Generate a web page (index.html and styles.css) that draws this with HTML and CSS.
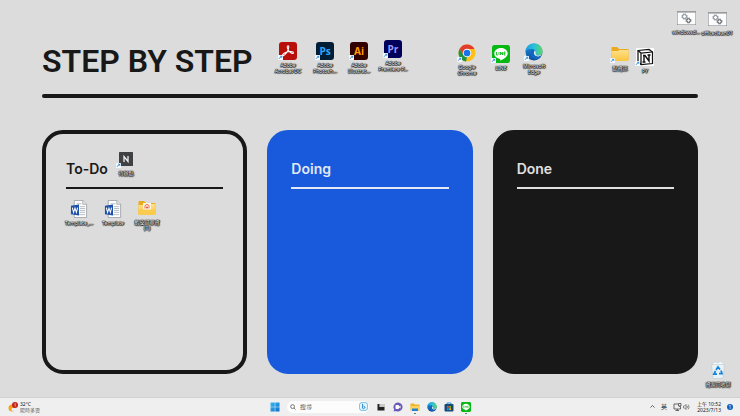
FILE: index.html
```html
<!DOCTYPE html>
<html lang="zh-Hant">
<head>
  <meta charset="UTF-8" />
  <meta name="viewport" content="width=device-width, initial-scale=1" />
  <title>Step by Step</title>
  <link rel="stylesheet" href="styles.css">
</head>
<body>
  <!-- shared icons -->
  <svg class="sprite" aria-hidden="true">
    <defs>
      <linearGradient id="edgeTop" x1="0" y1="0" x2="1" y2="0">
        <stop offset="0" stop-color="#1b9de2" />
        <stop offset="0.55" stop-color="#2cc3d5" />
        <stop offset="1" stop-color="#62d65b" />
      </linearGradient>
      <linearGradient id="edgeBody" x1="0" y1="0" x2="0" y2="1">
        <stop offset="0" stop-color="#1b8fe0" />
        <stop offset="1" stop-color="#0c4fa0" />
      </linearGradient>
      <linearGradient id="folderFront" x1="0" y1="0" x2="0" y2="1">
        <stop offset="0" stop-color="#ffe08a" />
        <stop offset="1" stop-color="#fbc540" />
      </linearGradient>
      <linearGradient id="winBlue" x1="0" y1="0" x2="1" y2="1">
        <stop offset="0" stop-color="#35b8f1" />
        <stop offset="1" stop-color="#0a70cf" />
      </linearGradient>
    </defs>
    <symbol id="arrow" viewBox="0 0 10 10">
      <rect width="10" height="10" rx="1" fill="#f4f9fd" />
      <path d="M2.500 8C2.500 5.500 4 4.500 6 4.500M4 2.500H7.500V6M7.500 2.500L5.500 4.700" fill="none" stroke="#1c7fd0" stroke-width="1.400" />
    </symbol>
    <symbol id="line" viewBox="0 0 36 36">
      <rect width="36" height="36" rx="5" fill="#06b912" />
      <path d="M18 6C10 6 4.500 11 4.500 17C4.500 22.500 9 26.500 15 27.500C17.500 28 16.500 29.500 16.500 31.500C20 30 31.500 24 31.500 17C31.500 11 26 6 18 6Z" fill="#fff" />
      <path d="M9 14V20H12M14 14V20M17 20V14L21 20V14M27 14H24V20H27M24 17H27" fill="none" stroke="#06b912" stroke-width="1.700" />
    </symbol>
    <symbol id="edge" viewBox="0 0 36 36">
      <circle cx="18" cy="18" r="17" fill="url(#edgeBody)" />
      <path d="M1 17C2 7 9 1 18 1C28 1 35 8 35 17C35 22 31 25 26 25C22 25 20 23.500 21 21.500C23 18 20 13 14 12C8 11.500 3 13 1 17Z" fill="url(#edgeTop)" />
      <path d="M15 13C10 17 10 25 16 30C21 33 28 32 32 27C24 30 17 27 17 20C17 17 19 15 20 15C18 13.500 17 13 15 13Z" fill="#1467bd" />
      <path d="M20 15C17 17 17 24 22 26C26 28 32 27 35 21C32 25 26 26 23 24.500C20 23 23 20 20 15Z" fill="#e9f6fb" />
    </symbol>
    <symbol id="folder" viewBox="0 0 36 30">
      <path d="M1 3Q1 1 3 1H12L16 5H33Q35 5 35 7V27H1Z" fill="#eba91d" />
      <path d="M1 9H14L17 7H35V27Q35 29 33 29H3Q1 29 1 27Z" fill="url(#folderFront)" />
    </symbol>
    <symbol id="word" viewBox="0 0 36 38">
      <path d="M8 1H26L34 9V37H8Z" fill="#fff" stroke="#8c9299" stroke-width="1.500" />
      <path d="M26 1V9H34" fill="#e6e9ed" stroke="#8c9299" stroke-width="1.500" />
      <path d="M13 8H23M20 14H31M20 18H31M20 22H31M20 26H31M13 31H31" stroke="#9aa3ad" stroke-width="1.500" />
      <path d="M1 12L18 9.500V32.500L1 30Z" fill="#1d50a8" />
      <path d="M4 16L6.500 26L9.500 17L12.500 26L15 16" fill="none" stroke="#fff" stroke-width="2.200" />
    </symbol>
    <symbol id="batch" viewBox="0 0 38 28">
      <rect x="0.500" y="0.500" width="37" height="27" fill="#fdfdfd" stroke="#7c8084" />
      <path d="M1 2H37" stroke="#7c8084" stroke-width="2" />
      <circle cx="15" cy="11" r="4" fill="none" stroke="#7b868e" stroke-width="2" />
      <circle cx="15" cy="11" r="5.500" fill="none" stroke="#7b868e" stroke-width="2" stroke-dasharray="2 2.300" />
      <circle cx="23" cy="19" r="3.500" fill="none" stroke="#444c52" stroke-width="2" />
      <circle cx="23" cy="19" r="5" fill="none" stroke="#444c52" stroke-width="2" stroke-dasharray="2 1.900" />
    </symbol>
  </svg>

  <main class="desktop">
    <div class="board">
      <h1>STEP BY STEP</h1>
      <div class="columns">
        <section class="card todo"><h2>To-Do</h2></section>
        <section class="card doing"><h2>Doing</h2></section>
        <section class="card done"><h2>Done</h2></section>
      </div>
    </div>

    <button class="shortcut acrobat">
      <svg class="icon" viewBox="0 0 36 36"><rect width="36" height="36" rx="6" fill="#b90f0b" /><path d="M8 27C5 25 12 21 18 19.500C25 18 30 20 28.500 22.500C26 25 18 18 16.500 11C16 7 20 6 19.500 11C19 17 11 29 8 27Z" fill="none" stroke="#fff" stroke-width="2.200" /></svg>
      <svg class="arrow"><use href="#arrow" /></svg>
      <span>Adobe<br>Acrobat DC</span>
    </button>
    <button class="shortcut photoshop">
      <svg class="icon" viewBox="0 0 36 36"><rect width="36" height="36" rx="6" fill="#001e36" /><text x="18" y="25" class="logo-text" fill="#31a8ff">Ps</text></svg>
      <svg class="arrow"><use href="#arrow" /></svg>
      <span>Adobe<br>Photosh...</span>
    </button>
    <button class="shortcut illustrator">
      <svg class="icon" viewBox="0 0 36 36"><rect width="36" height="36" rx="6" fill="#330000" /><text x="18" y="25" class="logo-text" fill="#ff9a00">Ai</text></svg>
      <svg class="arrow"><use href="#arrow" /></svg>
      <span>Adobe<br>Illustrat...</span>
    </button>
    <button class="shortcut premiere">
      <svg class="icon" viewBox="0 0 36 36"><rect width="36" height="36" rx="6" fill="#00005b" /><text x="18" y="25" class="logo-text" fill="#9999ff">Pr</text></svg>
      <svg class="arrow"><use href="#arrow" /></svg>
      <span>Adobe<br>Premiere P...</span>
    </button>
    <button class="shortcut chrome">
      <svg class="icon" viewBox="0 0 36 36">
        <circle cx="18" cy="18" r="17" fill="#fbc116" />
        <path d="M18 10H33A17 17 0 0 0 3.300 9.500L11 22Z" fill="#e33b2e" />
        <path d="M3.300 9.500L11 22L18 26L16 34.900A17 17 0 0 1 3.300 9.500Z" fill="#229342" />
        <circle cx="18" cy="18" r="8.500" fill="#fff" />
        <circle cx="18" cy="18" r="6.700" fill="#1a73e8" />
      </svg>
      <svg class="arrow"><use href="#arrow" /></svg>
      <span>Google<br>Chrome</span>
    </button>
    <button class="shortcut line-app">
      <svg class="icon"><use href="#line" /></svg>
      <svg class="arrow"><use href="#arrow" /></svg>
      <span>LINE</span>
    </button>
    <button class="shortcut edge">
      <svg class="icon"><use href="#edge" /></svg>
      <svg class="arrow"><use href="#arrow" /></svg>
      <span>Microsoft<br>Edge</span>
    </button>
    <button class="shortcut work">
      <svg class="icon"><use href="#folder" /></svg>
      <svg class="arrow"><use href="#arrow" /></svg>
      <span>點資訊</span>
    </button>
    <button class="shortcut notion">
      <svg class="icon" viewBox="0 0 36 36"><rect width="36" height="36" fill="#fff" /><path d="M4 5L26 3L33 8V31L10 33L4 26Z" fill="#fff" stroke="#111" stroke-width="2.500" /><path d="M4 5L10 10L33 8M10 10V33" fill="none" stroke="#111" stroke-width="2.500" /><path d="M14 15H18L26 26V14M16 15V28M13 28H19M23 14H29" fill="none" stroke="#111" stroke-width="2.800" /></svg>
      <svg class="arrow"><use href="#arrow" /></svg>
      <span>PY</span>
    </button>
    <button class="shortcut windows-bat">
      <svg class="icon"><use href="#batch" /></svg>
      <span>windowsd...</span>
    </button>
    <button class="shortcut office-bat">
      <svg class="icon"><use href="#batch" /></svg>
      <span>officeclean01</span>
    </button>
    <button class="shortcut notes">
      <svg class="icon" viewBox="0 0 28 28"><rect width="28" height="28" rx="1" fill="#404143" /><path d="M10 20V9L18 19V8" fill="none" stroke="#f4f4f4" stroke-width="2.500" /></svg>
      <svg class="arrow"><use href="#arrow" /></svg>
      <span>待辦點</span>
    </button>
    <button class="shortcut doc-one">
      <svg class="icon"><use href="#word" /></svg>
      <span>Template_...</span>
    </button>
    <button class="shortcut doc-two">
      <svg class="icon"><use href="#word" /></svg>
      <span>Template</span>
    </button>
    <button class="shortcut files">
      <svg class="icon" viewBox="0 0 36 30"><use href="#folder" /><path d="M10 5H26V20H10Z" fill="#fff6e0" /><path d="M14 16V12A4 4 0 0 1 22 12V16" fill="none" stroke="#e76a4c" stroke-width="2" /><circle cx="18" cy="14" r="2" fill="#d84848" /><path d="M1 18H35V27Q35 29 33 29H3Q1 29 1 27Z" fill="#fbcb50" /></svg>
      <span>蝦皮訂單資<br>(1)</span>
    </button>
    <button class="shortcut bin">
      <svg class="icon" viewBox="0 0 32 36">
        <path d="M4 6L10 2L15 4L21 1L28 6L26 10H6Z" fill="#f7fafb" stroke="#bcc9d1" />
        <path d="M3 7H29L26 34Q26 35 25 35H7Q6 35 6 34Z" fill="#e8f1f6" stroke="#b4c2cb" />
        <path d="M12 18L16 12L20 17M22 19L24 25H18M14 26H8L11 20" fill="none" stroke="#1583d8" stroke-width="3.500" />
      </svg>
      <span>資源回收筒</span>
    </button>
  </main>

  <footer class="taskbar">
    <button class="weather">
      <svg viewBox="0 0 20 20"><circle cx="8" cy="12" r="7" fill="#f3a21c" /><path d="M9 18A3 3 0 0 1 11 12A4 4 0 0 1 17 14A2 2 0 0 1 17 18Z" fill="#e6edf5" /><circle cx="14" cy="6" r="6" fill="#c4231c" /><path d="M13 4L14.500 3V9" fill="none" stroke="#fff" /></svg>
      <span>32°C<br><small>陽時多雲</small></span>
    </button>

    <nav class="apps">
      <button aria-label="開始"><svg viewBox="0 0 20 20" fill="url(#winBlue)"><path d="M1 1H9.500V9.500H1ZM10.500 1H19V9.500H10.500ZM1 10.500H9.500V19H1ZM10.500 10.500H19V19H10.500Z" /></svg></button>
      <div class="search">
        <svg viewBox="0 0 14 14"><circle cx="6" cy="6" r="4.500" fill="none" stroke="#333" stroke-width="1.500" /><path d="M9.500 9.500L13 13" stroke="#333" stroke-width="1.500" /></svg>
        <input type="text" placeholder="搜尋" aria-label="搜尋">
        <svg class="bing" viewBox="0 0 20 20"><rect x="1" y="1" width="18" height="18" rx="6" fill="#e4f5fc" stroke="#3aa6d5" stroke-width="1.500" /><path d="M8 4V14L10 15L14 12L10 9" fill="none" stroke="#147dc6" stroke-width="2" /></svg>
      </div>
      <button aria-label="工作檢視"><svg viewBox="0 0 20 20"><rect x="8" y="4" width="10" height="6" fill="#c9c9c9" /><path d="M3 4H7V10H17V17H3Z" fill="#222" /></svg></button>
      <button aria-label="聊天"><svg viewBox="0 0 20 20"><path d="M10 1A9 9 0 1 1 6 18L1 19L2.500 15A9 9 0 0 1 10 1Z" fill="#6b58b8" /><rect x="5" y="6" width="7" height="8" rx="1.500" fill="#fff" /><path d="M12 9L15 7V13L12 11Z" fill="#fff" /></svg></button>
      <button class="running" aria-label="檔案總管"><svg viewBox="0 0 20 20"><path d="M1 3H8L10 5H19V17H1Z" fill="#f0b323" /><path d="M1 8H19V17H1Z" fill="#fcd35c" /><path d="M4 18V13H16V18Z" fill="#2483cf" /></svg></button>
      <button aria-label="Microsoft Edge"><svg><use href="#edge" /></svg></button>
      <button aria-label="Microsoft Store"><svg viewBox="0 0 20 20"><path d="M6 5V2H14V5" fill="none" stroke="#2693d6" stroke-width="2" /><rect x="1" y="4" width="18" height="15" rx="2" fill="#174a79" /><path d="M6 8H9.500V11.500H6Z" fill="#f25022" /><path d="M10.500 8H14V11.500H10.500Z" fill="#7fba00" /><path d="M6 12.500H9.500V16H6Z" fill="#00a4ef" /><path d="M10.500 12.500H14V16H10.500Z" fill="#ffb900" /></svg></button>
      <button class="running" aria-label="LINE"><svg><use href="#line" /></svg></button>
    </nav>

    <div class="tray">
      <button class="chevron" aria-label="顯示隱藏的圖示"><svg viewBox="0 0 10 10"><path d="M1 7L5 3L9 7" fill="none" stroke="#333" stroke-width="1.500" /></svg></button>
      <button class="ime">英</button>
      <button class="status" aria-label="網路與音量">
        <svg viewBox="0 0 36 16"><path d="M10 2H2V12H15V7M5 15H12M8.500 12V15M11 1H16V6H11ZM13.500 6V8" fill="none" stroke="#333" stroke-width="1.400" /><path d="M21 6H23L26 3V13L23 10H21ZM28 5.500Q30 8 28 10.500M30.500 3.500Q34 8 30.500 12.500" fill="none" stroke="#555" stroke-width="1.300" /></svg>
      </button>
      <button class="clock">上午 10:52<br>2023/7/13</button>
      <button class="badge">1</button>
    </div>
  </footer>
</body>
</html>
```
FILE: styles.css
```css
:root {
  --ink: #181818;
  --wall: #dcdcdc;
  --blue: #185adb;
}

* {
  box-sizing: border-box;
}

body {
  margin: 0;
  min-height: 100vh;
  display: flex;
  flex-direction: column;
  font-family: "Noto Sans", "Noto Sans CJK TC", sans-serif;
  color: var(--ink);
  background: var(--wall);
}

button {
  border: none;
  padding: 0;
  background: none;
  color: inherit;
  font-family: inherit;
  cursor: pointer;
}

svg {
  display: block;
}

.sprite {
  position: absolute;
  width: 0;
  height: 0;
}

/* wallpaper */
.desktop {
  position: relative;
  flex: 1;
  display: flex;
}

.board {
  flex: 1;
  display: flex;
  flex-direction: column;
  padding: 40px 42px 23px;
}

h1 {
  margin: 0 0 32px;
  font-family: Roboto, sans-serif;
  font-size: 32px;
  font-weight: 600;
  line-height: 42px;
}

h1::after {
  content: "";
  display: block;
  height: 4px;
  margin-top: 12px;
  border-radius: 2px;
  background: var(--ink);
}

.columns {
  flex: 1;
  display: grid;
  grid-template-columns: repeat(3, 1fr);
  gap: 20px;
}

.card {
  padding: 24px 20px;
  border: 4px solid var(--ink);
  border-radius: 21px;
}

.card h2 {
  margin: 0;
  padding-bottom: 7px;
  border-bottom: 2px solid;
  font-family: Inter, sans-serif;
  font-size: 14px;
  font-weight: 600;
  line-height: 22px;
}

.doing {
  background: var(--blue);
  border-color: var(--blue);
  color: #e3e8f5;
}

.done {
  background: var(--ink);
  color: #e0e0e0;
}

/* desktop icons */
.shortcut {
  position: absolute;
  width: 36px;
  display: flex;
  flex-direction: column;
  align-items: center;
  font-size: 5px;
  line-height: 6px;
  color: #fff;
  white-space: nowrap;
  text-shadow: 0 0 1px #000, 0 0 1px #000, 0 0 1px #000, 0 1px 1px #000, 1px 0 1px #000;
}

.shortcut .icon {
  width: 18px;
  height: 18px;
  margin-bottom: 2px;
}

.shortcut .arrow {
  position: absolute;
  left: 8px;
  top: 13px;
  width: 5px;
  height: 5px;
}

.logo-text {
  font: 700 20px "Open Sans", sans-serif;
  text-anchor: middle;
  text-shadow: none;
}

.acrobat { left: 270px; top: 42px; }
.photoshop { left: 307px; top: 42px; }
.illustrator { left: 341px; top: 42px; }
.premiere { left: 375px; top: 40px; }
.chrome { left: 449px; top: 44px; }
.line-app { left: 483px; top: 45px; }
.edge { left: 516px; top: 43px; }
.work { left: 602px; top: 45px; }
.notion { left: 627px; top: 48px; }
.windows-bat { right: 36px; top: 9px; }
.office-bat { right: 5px; top: 10px; }
.notes { left: 108px; top: 152px; }
.doc-one { left: 61px; top: 200px; }
.doc-two { left: 95px; top: 200px; }
.files { left: 129px; top: 199px; }
.bin { right: 4px; bottom: 10px; }

.notes .icon {
  width: 14px;
  height: 14px;
  margin-bottom: 4px;
}

.notes .arrow {
  top: 11px;
}

.windows-bat .icon,
.office-bat .icon {
  width: 19px;
}

/* taskbar */
.taskbar {
  height: 19px;
  display: grid;
  grid-template-columns: 1fr auto 1fr;
  align-items: center;
  padding: 0 7px 1px 8px;
  border-top: 1px solid #d0d0d0;
  background: #efefef;
}

.weather {
  display: flex;
  align-items: center;
  gap: 2px;
  font-size: 5px;
  line-height: 6px;
  text-align: left;
}

.weather svg {
  width: 10px;
  height: 10px;
}

.weather small {
  font-size: 5px;
  color: #666;
}

.apps {
  display: flex;
  align-items: center;
  gap: 7px;
}

.apps button {
  position: relative;
}

.apps button svg {
  width: 10px;
  height: 10px;
}

.running::after {
  content: "";
  position: absolute;
  left: 4px;
  bottom: -2px;
  width: 2px;
  height: 1px;
  background: #777;
}

.search {
  display: flex;
  align-items: center;
  gap: 4px;
  width: 82px;
  height: 12px;
  padding: 0 1px 0 3px;
  border-radius: 6px;
  background: #fcfcfc;
}

.search svg {
  flex: none;
  width: 6px;
  height: 6px;
}

.search .bing {
  width: 9px;
  height: 9px;
}

.search input {
  flex: 1;
  min-width: 0;
  padding: 0;
  border: none;
  outline: none;
  background: none;
  font: 6px "Noto Sans", "Noto Sans CJK TC", sans-serif;
}

.search input::placeholder {
  color: #555;
}

.tray {
  display: flex;
  align-items: center;
  justify-content: flex-end;
  gap: 6px;
  font-size: 5px;
  line-height: 6px;
}

.tray button {
  font-size: 5px;
  line-height: 6px;
}

.chevron svg {
  width: 5px;
  height: 5px;
}

.tray .ime {
  font-size: 6px;
}

.status svg {
  width: 18px;
  height: 8px;
}

.tray .clock {
  text-align: right;
}

.tray .badge {
  width: 6px;
  height: 6px;
  border-radius: 50%;
  background: #0b62c4;
  color: #fff;
}
```
